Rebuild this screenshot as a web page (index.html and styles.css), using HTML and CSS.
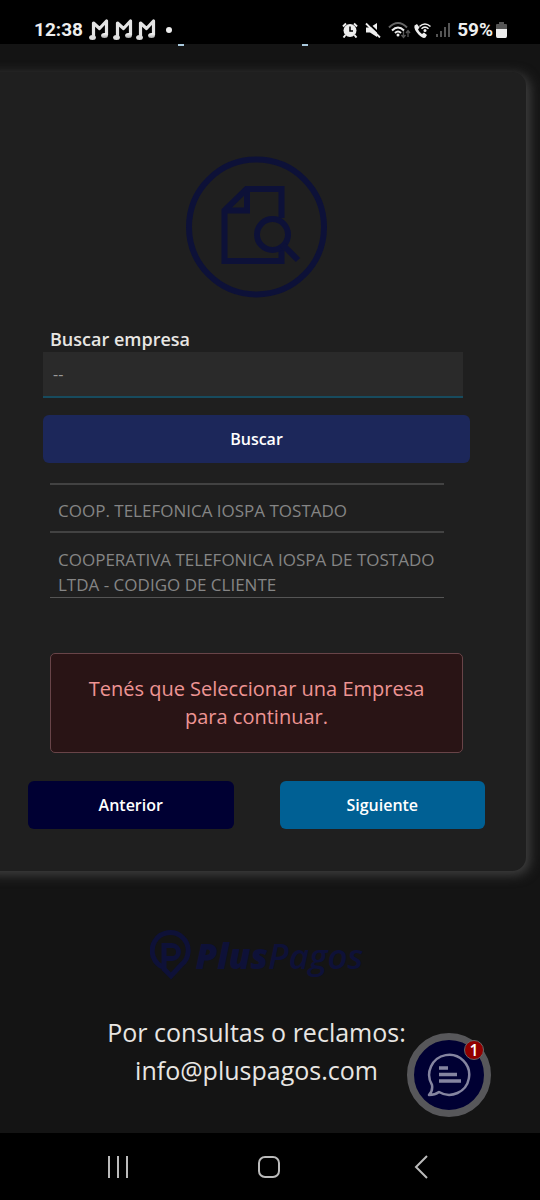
FILE: index.html
```html
<!DOCTYPE html>
<html lang="es">
<head>
<meta charset="utf-8">
<meta name="viewport" content="width=device-width, initial-scale=1">
<title>PlusPagos</title>
<link rel="stylesheet" href="styles.css">
</head>
<body>
<header class="status">
  <div class="status-group">
    <span class="clock">12:38</span>
    <svg class="notes" width="68" height="22" viewBox="0 0 68 22" aria-hidden="true">
      <defs>
        <linearGradient id="silver" x1="0" y1="0" x2="0" y2="1"><stop offset="0" stop-color="#fff"/><stop offset="1" stop-color="#aaa"/></linearGradient>
        <g id="note">
          <path d="M4.500 18V4L10.500 9.500L17.500 2V16" fill="none" stroke="#e4e4e4" stroke-width="3.200" stroke-linejoin="round"/>
          <ellipse cx="3.500" cy="18.500" rx="3.400" ry="2.500" fill="#dedede"/>
          <ellipse cx="15.500" cy="16.500" rx="3.400" ry="2.500" fill="url(#silver)"/>
        </g>
      </defs>
      <use href="#note"/><use href="#note" x="24"/><use href="#note" x="47"/>
    </svg>
    <span class="dot"></span>
  </div>
  <div class="status-group status-right">
    <svg width="16" height="16" viewBox="0 0 16 16" aria-hidden="true">
      <circle cx="8" cy="8.500" r="6.500" fill="#eee"/>
      <path d="M1 4.500L4 1.500M15 4.500L12 1.500M3.500 13L1.500 15.500M12.500 13L14.500 15.500" stroke="#eee" stroke-width="2"/>
      <path d="M8 4.500V9H11" fill="none" stroke="#000" stroke-width="1.500"/>
    </svg>
    <svg class="mute" width="16" height="16" viewBox="0 0 16 16" aria-hidden="true">
      <path d="M1 5.500H5L12 1V15L5 10.500H1Z" fill="#eee"/>
      <path d="M2.500 0.500L16 13" stroke="#000" stroke-width="2"/>
      <path d="M1 1.500L15 15.500" stroke="#eee" stroke-width="1.800"/>
    </svg>
    <svg class="wifi" width="23" height="18" viewBox="0 0 23 18" aria-hidden="true" fill="none">
      <path d="M1 6.500Q10 -2.500 19 6.500" stroke="#666" stroke-width="2"/>
      <path d="M4 9.500Q10 3.500 16 9.500" stroke="#eee" stroke-width="2"/>
      <path d="M7 12Q10 9 13 12" stroke="#eee" stroke-width="2"/>
      <circle cx="10" cy="14" r="1.500" fill="#eee"/>
      <path d="M15.500 10V16M13.500 14L15.500 16.500L17.500 14M20 16V10M18 12L20 9.500L22 12" stroke="#555" stroke-width="1.300"/>
    </svg>
    <svg class="call" width="18" height="17" viewBox="0 0 18 17" aria-hidden="true" fill="none">
      <path d="M1.500 3.500L4 2L6.500 5.500L5 7.500Q6.500 10.500 9 12L11 10.500L14 13L12.500 15.500Q10 17 5.500 12.500Q0.500 7 1.500 3.500Z" fill="#eee"/>
      <path d="M6.500 4.500Q12 -0.500 17.500 4.500M8.500 6.800Q12 3.500 15.500 6.800" stroke="#eee" stroke-width="1.500"/>
      <circle cx="12" cy="8.500" r="1.500" fill="#eee"/>
    </svg>
    <svg class="signal" width="15" height="16" viewBox="0 0 15 16" aria-hidden="true" fill="#555">
      <path d="M0 12H2V15H0ZM4 9H6V15H4ZM8 5H10V15H8ZM12 1H14V15H12Z"/>
    </svg>
    <span class="charge">59%</span>
    <svg class="battery" width="11" height="16" viewBox="0 0 11 16" aria-hidden="true">
      <path d="M3 0H8V2H10Q11 2 11 3V7H0V3Q0 2 1 2H3Z" fill="#555"/>
      <path d="M0 7H11V14Q11 16 9.500 16H1.500Q0 16 0 14Z" fill="#eee"/>
    </svg>
  </div>
</header>

<main class="page">
  <div class="title-edge" aria-hidden="true"><span></span><span></span></div>
  <section class="card">
    <svg class="emblem" width="142" height="142" viewBox="0 0 142 142" aria-hidden="true" fill="none" stroke="#0d1138" stroke-width="6">
      <circle cx="70.500" cy="71" r="67.500"/>
      <path d="M95.500 62V33H60.500L38.500 54.500V105H95.500V94M61 33V54.500H38.500"/>
      <circle cx="86.500" cy="78.500" r="15.500"/>
      <path d="M97 89L112 104"/>
    </svg>
    <form class="form">
      <label class="label" for="company">Buscar empresa</label>
      <input class="field" id="company" type="text" placeholder="--">
      <button class="button search" type="button">Buscar</button>
      <ul class="results">
        <li>COOP. TELEFONICA IOSPA TOSTADO</li>
        <li>COOPERATIVA TELEFONICA IOSPA DE TOSTADO LTDA - CODIGO DE CLIENTE</li>
      </ul>
      <p class="alert" role="alert">Tenés que Seleccionar una Empresa para continuar.</p>
    </form>
    <div class="actions">
      <button class="button previous" type="button">Anterior</button>
      <button class="button next" type="button">Siguiente</button>
    </div>
  </section>
  <footer class="footer">
    <div class="brand">
      <svg width="42" height="52" viewBox="0 0 42 52" aria-hidden="true" fill="none" stroke="#0e1138">
        <path d="M14 37.500A18 18 0 1 1 31 35L21 46L14 39V15.500H22A6.500 6.500 0 0 1 22 28.500H14" stroke-width="5"/>
      </svg>
      <span class="brand-name"><b>Plus</b>Pagos</span>
    </div>
    <p class="contact">Por consultas o reclamos:<br>info@pluspagos.com</p>
    <button class="chat" type="button" aria-label="Chat, 1 mensaje">
      <svg width="46" height="46" viewBox="0 0 46 46" aria-hidden="true" fill="none" stroke="#8585a0">
        <path d="M6 33A20 20 0 1 1 13 40Q9 43 3 43Q7 39 6 33Z" stroke-width="2.500" stroke-linejoin="round"/>
        <path d="M13 16H22M13 22.500H31M13 29H35" stroke-width="3.500"/>
      </svg>
      <span class="badge">1</span>
    </button>
  </footer>
</main>

<nav class="navbar" aria-label="Sistema">
  <button type="button" aria-label="Recientes"><svg width="24" height="24" viewBox="0 0 24 24" fill="none" stroke="#bbb" stroke-width="2"><path d="M3 1V23M12 1V23M21 1V23"/></svg></button>
  <button type="button" aria-label="Inicio"><svg width="24" height="24" viewBox="0 0 24 24" fill="none" stroke="#bbb" stroke-width="2"><rect x="2" y="2" width="20" height="20" rx="6"/></svg></button>
  <button type="button" aria-label="Atrás"><svg width="24" height="24" viewBox="0 0 24 24" fill="none" stroke="#bbb" stroke-width="2"><path d="M18 1L7 12L18 23"/></svg></button>
</nav>
</body>
</html>
```
FILE: styles.css
```css
* {
  box-sizing: border-box;
}

body {
  margin: 0;
  min-height: 100vh;
  display: flex;
  flex-direction: column;
  background: #141414;
  color: #e8e6e3;
  font-family: "Open Sans", "Noto Sans", sans-serif;
}

button {
  border: 0;
  padding: 0;
  font: inherit;
  color: inherit;
}

.status {
  height: 44px;
  padding: 16px 33px 0 34px;
  display: flex;
  justify-content: space-between;
  align-items: flex-start;
  background: #000;
  color: #eee;
  font: bold 19px/28px Roboto, sans-serif;
}

.status-group {
  display: flex;
  align-items: center;
}

.notes {
  margin-left: 6px;
}

.dot {
  width: 6px;
  height: 6px;
  margin-left: 9px;
  border-radius: 50%;
  background: #eee;
}

.mute {
  margin-left: 7px;
}

.wifi {
  margin-left: 7px;
}

.call {
  margin-left: 2px;
}

.signal {
  margin-left: 5px;
}

.charge {
  margin-left: 6px;
}

.battery {
  margin-left: 3px;
}

.page {
  flex: 1;
  display: flex;
  flex-direction: column;
  overflow: hidden;
}

.title-edge {
  height: 28px;
  display: flex;
  justify-content: center;
  gap: 118px;
  padding-right: 54px;
}

.title-edge span {
  width: 6px;
  height: 2px;
  background: #a9c9dd;
}

.card {
  margin: 0 14px 0 -24px;
  padding: 84px 13px 42px 24px;
  display: flex;
  flex-direction: column;
  border-radius: 14px;
  background: #1f1f1f;
  box-shadow: 3px 3px 12px 1px #404040;
}

.emblem {
  align-self: center;
}

.form {
  margin: 28px 43px 0;
  display: flex;
  flex-direction: column;
}

.label {
  margin-left: 7px;
  font-size: 18px;
  font-weight: 600;
  line-height: 26px;
}

.field {
  width: auto;
  margin-right: 7px;
  height: 46px;
  padding: 0 10px;
  border: 0;
  border-bottom: 2px solid #174b5e;
  border-radius: 0;
  background: #2a2a2a;
  color: #e8e6e3;
  font: 16px "Open Sans", "Noto Sans", sans-serif;
}

.field::placeholder {
  color: #999;
  opacity: 1;
}

.button {
  height: 48px;
  border-radius: 6px;
  color: #fff;
  font-size: 16px;
  font-weight: 600;
}

.search {
  margin-top: 17px;
  background: #1c275a;
}

.results {
  list-style: none;
  margin: 20px 26px 0 7px;
  padding: 0;
  border-bottom: 1px solid #555;
  color: #858585;
  font-size: 17px;
  line-height: 25px;
}

.results li {
  border-top: 2px solid #424242;
  padding: 13px 8px 8px;
}

.results li:last-child {
  padding: 14px 8px 0;
}

.alert {
  margin: 55px 7px 0;
  padding: 21px 24px;
  border: 1px solid #684448;
  border-radius: 5px;
  background: #291415;
  color: #ee9494;
  font-size: 20px;
  line-height: 28px;
  text-align: center;
}

.actions {
  margin: 28px 28px 0;
  display: grid;
  grid-template-columns: 1fr 1fr;
  gap: 46px;
}

.previous {
  background: #000033;
}

.next {
  background: #006094;
}

.footer {
  position: relative;
  padding: 59px 27px 44px 0;
}

.brand {
  display: flex;
  justify-content: center;
  align-items: center;
  gap: 4px;
  height: 52px;
}

.brand-name {
  color: #0e1138;
  font-size: 35px;
  font-style: italic;
  font-weight: 600;
  line-height: 52px;
}

.brand-name b {
  font-weight: 800;
}

.contact {
  margin: 31px 0 0;
  font-size: 25px;
  line-height: 38px;
  text-align: center;
}

.chat {
  position: absolute;
  right: 49px;
  bottom: 16px;
  width: 84px;
  height: 84px;
  display: grid;
  place-items: center;
  border: 7px solid #57575a;
  border-radius: 50%;
  background: #000033;
}

.badge {
  position: absolute;
  top: 0;
  right: 0;
  width: 20px;
  height: 20px;
  border: 1px solid #666;
  border-radius: 50%;
  background: #920000;
  color: #fff;
  font-size: 16px;
  font-weight: 600;
  line-height: 18px;
  text-align: center;
}

.navbar {
  height: 68px;
  padding: 0 43px 0 42px;
  display: flex;
  justify-content: space-around;
  align-items: center;
  background: #000;
}

.navbar button {
  flex: 0 0 48px;
  height: 48px;
  display: grid;
  place-items: center;
  background: none;
}
```
